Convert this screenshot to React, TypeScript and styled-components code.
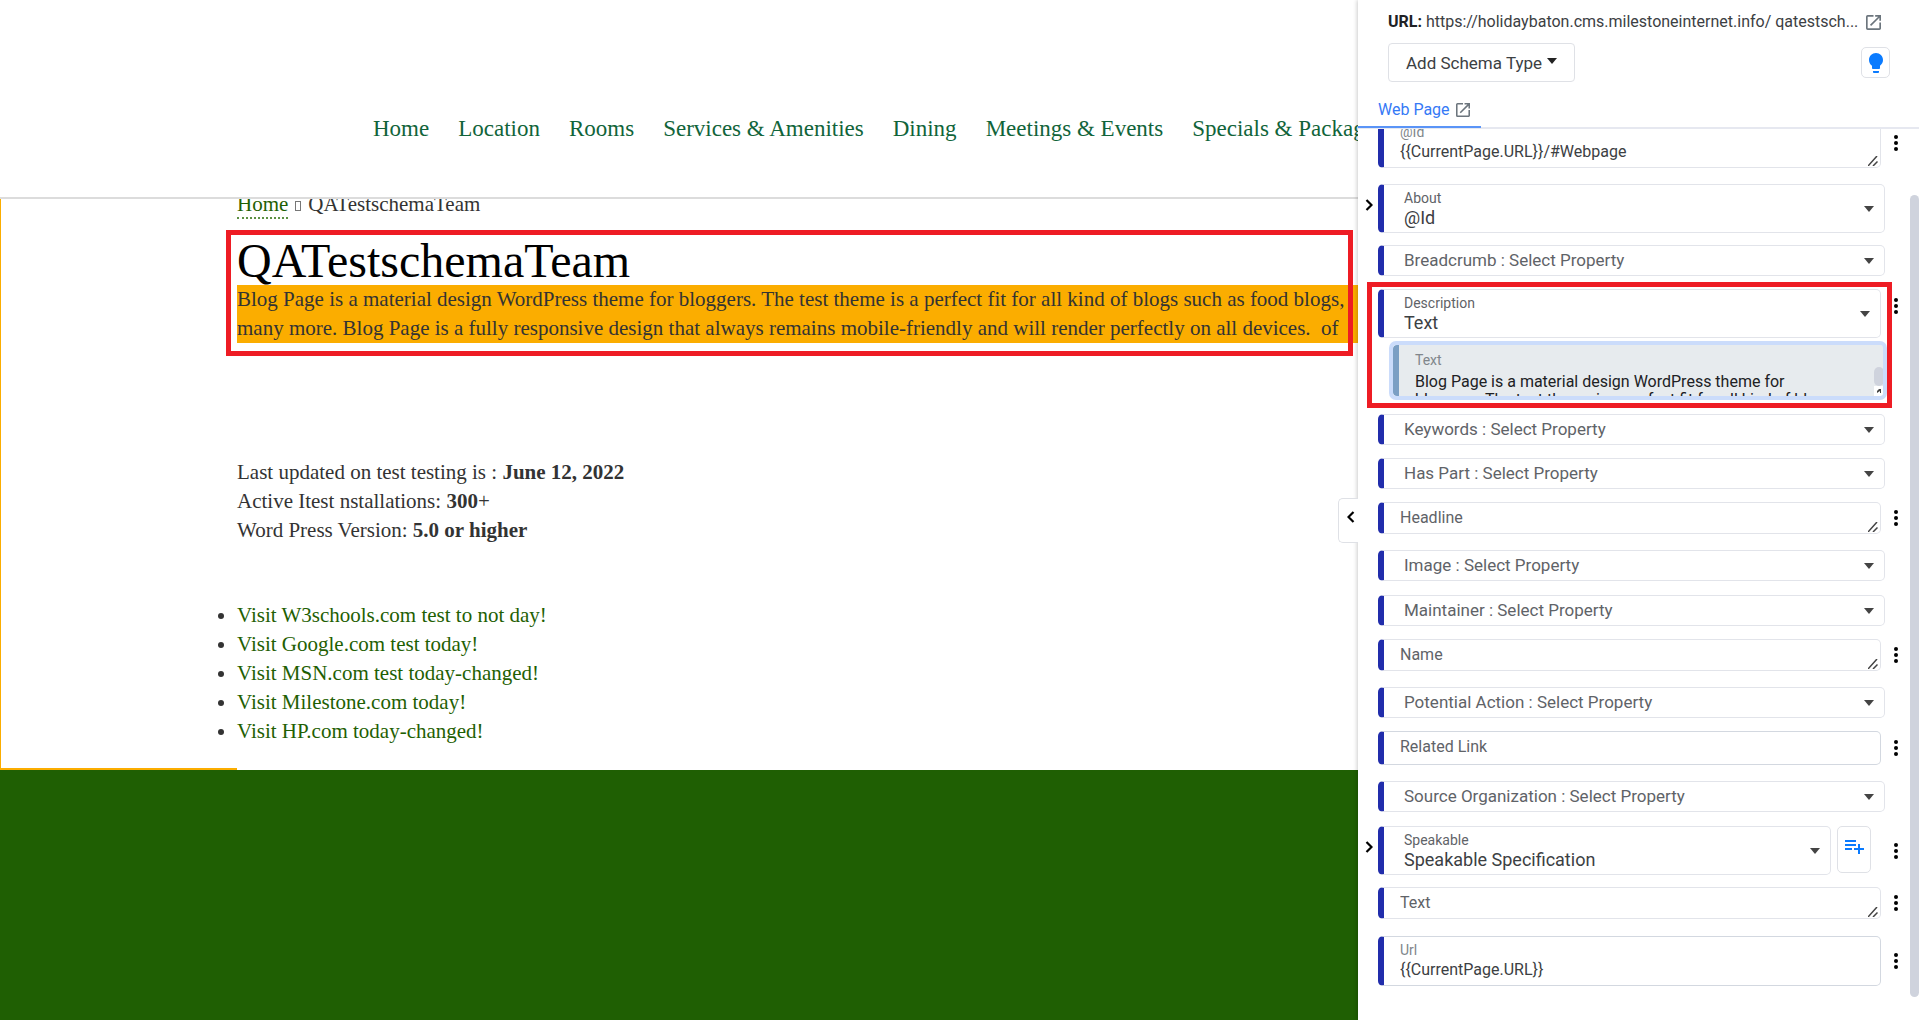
import React, { useId } from "react";
import styled, { createGlobalStyle, css } from "styled-components";

const Reset = createGlobalStyle`
  *, *::before, *::after { box-sizing: border-box; }
  body { margin: 0; background: #fff; }
  button, input, select, textarea { font: inherit; color: inherit; }
`;

/* ---------- page shell ---------- */

const Shell = styled.div`
  display: grid;
  grid-template-columns: minmax(0, 1fr) 561px;
  height: 100vh;
  overflow: hidden;
`;

/* ---------- site preview ---------- */

const Site = styled.div`
  display: flex;
  flex-direction: column;
  min-width: 0;
  overflow: hidden;
  position: relative;
  font-family: "Liberation Serif", "Times New Roman", serif;
  font-size: 21px;
  line-height: 29px;
  color: #333;
  white-space: nowrap;
`;

const SiteHeader = styled.header`
  flex: none;
  padding: 114px 0 53px 373px;
  border-bottom: 2px solid #dcdcdc;
`;

const SiteNav = styled.nav`
  display: flex;
  gap: 29px;
  font-size: 23px;
  line-height: 30px;

  a {
    color: #11643a;
    text-decoration: none;
  }
`;

const SiteBody = styled.main`
  flex: none;
  overflow: hidden;
  padding: 0 0 22px 236px;
  border-left: 1px solid #fbad00;
`;

const Crumbs = styled.div`
  margin-top: -10px;
  display: flex;
  align-items: center;
  gap: 7px;

  a {
    color: #1f5f03;
    text-decoration: none;
    border-bottom: 2px dotted #5c9144;
    line-height: 26px;
    margin-top: 2px;
  }
`;

const CrumbMark = styled.i`
  width: 6px;
  height: 10px;
  border: 1px solid #777;
  margin-top: 3px;
`;

const Title = styled.h1`
  margin: 17px 0 0;
  font-size: 48px;
  font-weight: 400;
  line-height: 49px;
  color: #000;
`;

const Highlight = styled.p`
  margin: 0;
  background: #fbad00;
`;

const Facts = styled.p`
  margin: 115px 0 0;
`;

const Links = styled.ul`
  margin: 56px 0 0;
  padding: 0;

  a {
    color: #1f5f03;
    text-decoration: none;
  }
`;

const Seam = styled.div`
  flex: none;
  width: 237px;
  height: 2px;
  background: #fbad00;
`;

const SiteFooter = styled.footer`
  flex: 1;
  background: #1f5f03;
`;

const Marker = styled.div<{ $area: "title" | "description" }>`
  position: absolute;
  z-index: 3;
  border: 5px solid #ee1c24;
  pointer-events: none;
  ${(p) =>
    p.$area === "title"
      ? css`
          inset: 230px 5px auto 226px;
          height: 126px;
        `
      : css`
          inset: -7px 18px -12px 9px;
        `}
`;

/* ---------- schema panel ---------- */

const Panel = styled.aside`
  position: relative;
  display: flex;
  flex-direction: column;
  min-width: 0;
  height: 100vh;
  background: #fff;
  box-shadow: -1px 0 4px rgba(0, 0, 0, 0.2);
  font-family: Roboto, "Liberation Sans", sans-serif;
  font-size: 16px;
  line-height: 20px;
  color: #3c4043;
`;

const CollapseTab = styled.button`
  position: absolute;
  left: -20px;
  top: 498px;
  width: 20px;
  height: 45px;
  padding: 0 0 8px 4px;
  display: grid;
  place-items: center;
  background: #fff;
  border: 1px solid #dfe1e6;
  border-right: 0;
  border-radius: 5px 0 0 5px;
`;

const PanelHead = styled.div`
  flex: none;
  height: 129px;
  display: flex;
  flex-direction: column;
  border-bottom: 2px solid #e6e8f0;
`;

const UrlLine = styled.div`
  display: flex;
  align-items: center;
  justify-content: space-between;
  padding: 12px 38px 0 30px;
`;

const UrlText = styled.span`
  white-space: nowrap;
  b { font-weight: 700; color: #202124; }
`;

const Tools = styled.div`
  display: flex;
  align-items: center;
  justify-content: space-between;
  padding: 11px 29px 0 30px;
`;

const AddType = styled.button`
  display: flex;
  align-items: center;
  gap: 5px;
  height: 39px;
  padding: 0 17px;
  background: #fff;
  border: 1px solid #dfe1e6;
  border-radius: 4px;
  font-size: 17px;

  svg { margin-bottom: 4px; }
`;

const SquareButton = styled.button<{ $w: number; $h: number }>`
  flex: none;
  width: ${(p) => p.$w}px;
  height: ${(p) => p.$h}px;
  display: grid;
  place-items: center;
  padding: 0 0 ${(p) => (p.$h > 40 ? 5 : 0)}px;
  background: #fff;
  border: 1px solid #dfe1e6;
  border-radius: 5px;
`;

const Tab = styled.a`
  align-self: flex-start;
  display: flex;
  align-items: center;
  gap: 6px;
  height: 45px;
  margin: auto 0 -1px;
  padding: 10px 11px 0 20px;
  color: #3579f6;
  text-decoration: none;
  border-bottom: 2px solid #5a94f7;
`;

const PanelBody = styled.div`
  flex: 1;
  min-height: 0;
  display: flex;
  justify-content: space-between;
  overflow: hidden;
`;

const Fields = styled.form`
  flex: 1;
  min-width: 0;
  display: flex;
  flex-direction: column;
  margin-top: -11px;
`;

const Track = styled.div`
  width: 9px;
  padding: 66px 0 23px;
`;

const Thumb = styled.div`
  height: 100%;
  background: #cfd3dd;
  border-radius: 5px;
`;

const Row = styled.div<{ $after: number }>`
  flex: none;
  display: grid;
  grid-template-columns: 20px minmax(0, 1fr) 25px;
  align-items: center;
  margin-bottom: ${(p) => p.$after}px;
`;

const Expander = styled.button`
  display: grid;
  place-items: center;
  padding: 0 0 8px 2px;
  width: 20px;
  height: 28px;
  border: 0;
  background: none;
`;

const RowMain = styled.div<{ $inset: number }>`
  grid-column: 2;
  display: flex;
  gap: 6px;
  min-width: 0;
  padding-right: ${(p) => p.$inset}px;
`;

const Box = styled.div<{ $h: number; $pad: number; $drop: number; $strong?: boolean }>`
  position: relative;
  flex: 1;
  min-width: 0;
  height: ${(p) => p.$h}px;
  display: flex;
  flex-direction: column;
  justify-content: center;
  padding-left: ${(p) => p.$pad}px;
  padding-bottom: ${(p) => p.$drop}px;
  border: 1px solid ${(p) => (p.$strong ? "#d3d8e0" : "#e2e4ea")};
  border-left: 6px solid #212dab;
  border-radius: 5px;
  background: #fff;
`;

const Caption = styled.label<{ $faint?: boolean }>`
  font-size: 14px;
  line-height: 20px;
  color: ${(p) => (p.$faint ? "#80868b" : "#5f6368")};
`;

const bare = css`
  display: block;
  width: 100%;
  margin: 0;
  padding: 0;
  border: 0;
  outline: 0;
  background: none;
  height: 20px;
  line-height: 20px;

  &::placeholder {
    color: #5f6368;
    opacity: 1;
  }
`;

const Picker = styled.select<{ $filled: boolean }>`
  ${bare}
  appearance: none;
  font-size: ${(p) => (p.$filled ? 18 : 17)}px;
  color: ${(p) => (p.$filled ? "#3c4043" : "#5f6368")};
`;

const LineInput = styled.input`
  ${bare}
`;

const Area = styled.textarea`
  ${bare}
  resize: none;
  overflow: hidden;
`;

const ArrowSlot = styled.span`
  position: absolute;
  right: 10px;
  top: 50%;
  margin-top: -3px;
  display: flex;
  pointer-events: none;
`;

const GripSlot = styled.span`
  position: absolute;
  right: 2px;
  bottom: 1px;
  display: flex;
`;

const MoreButton = styled.button<{ $raised?: boolean }>`
  grid-column: 3;
  display: grid;
  place-items: center;
  padding: 0 3px ${(p) => (p.$raised ? 15 : 0)}px 0;
  border: 0;
  background: none;
`;

const Group = styled.div`
  position: relative;
  flex: none;
  margin-bottom: 18px;
`;

const Nested = styled.div`
  position: relative;
  height: 51px;
  margin: 0 26px 0 35px;
  padding: 5px 0 0 16px;
  overflow: hidden;
  background: #e7ebee;
  border-left: 6px solid #7b9fc4;
  border-radius: 4px;
`;

const NestedRing = styled.div`
  position: absolute;
  inset: 52px 23px -4px 31px;
  border: 4px solid #cbdcfb;
  border-radius: 7px;
  z-index: 1;
  pointer-events: none;
`;

const NestedArea = styled(Area)`
  height: 40px;
  width: 430px;
  line-height: 18px;
  padding-top: 3px;
  color: #202124;
`;

const MiniThumb = styled.span`
  position: absolute;
  right: 0;
  top: 22px;
  width: 10px;
  height: 19px;
  border-radius: 5px;
  background: #cfd3dd;
`;

const MiniCorner = styled.span`
  position: absolute;
  right: 0;
  bottom: 0;
  width: 10px;
  height: 10px;
  display: grid;
  place-items: center;
  background: #fff;
`;

/* ---------- drawings ---------- */

const OpenIcon = ({ size }: { size: number }) => (
  <svg width={size} height={size} viewBox="3 3 18 18" fill="#6c757d" aria-hidden="true">
    <path d="M19 19H5V5h7V3H5a2 2 0 0 0-2 2v14a2 2 0 0 0 2 2h14c1.1 0 2-.9 2-2v-7h-2v7zM14 3v2h3.59l-9.83 9.83 1.41 1.41L19 6.41V10h2V3h-7z" />
  </svg>
);

const Triangle = ({ width = 10, color = "#444" }: { width?: number; color?: string }) => (
  <svg width={width} height="6" viewBox="0 0 10 6" preserveAspectRatio="none" fill={color} aria-hidden="true">
    <path d="M0 0h10L5 6z" />
  </svg>
);

const Chevron = ({ left }: { left?: boolean }) => (
  <svg width="8" height="12" viewBox="0 0 8 12" fill="none" stroke="#000" strokeWidth="2.2" aria-hidden="true">
    <path d={left ? "M6.5 1 1.5 6l5 5" : "M1.5 1l5 5-5 5"} />
  </svg>
);

const Dots = () => (
  <svg width="4" height="16" viewBox="0 0 4 16" aria-hidden="true">
    <circle cx="2" cy="2" r="2" />
    <circle cx="2" cy="8" r="2" />
    <circle cx="2" cy="14" r="2" />
  </svg>
);

const Grip = () => (
  <svg width="10" height="10" viewBox="0 0 10 10" stroke="#444" strokeWidth="1.5" aria-hidden="true">
    <path d="M0 10 9 0M5 10 9.500 5.500" />
  </svg>
);

const MiniGrip = () => (
  <svg width="4" height="4" viewBox="0 0 4 4" fill="#444" aria-hidden="true">
    <path d="M0 4V2l2-2h2v4H3V2z" />
  </svg>
);

const Bulb = () => (
  <svg width="14" height="20" viewBox="5 2 14 20" fill="#0a7bff" aria-hidden="true">
    <path d="M9 21c0 .5.4 1 1 1h4c.6 0 1-.5 1-1v-1H9v1zm3-19C8.100 2 5 5.100 5 9c0 2.400 1.200 4.500 3 5.700V17c0 .5.4 1 1 1h6c.6 0 1-.5 1-1v-2.300c1.800-1.300 3-3.400 3-5.700 0-3.900-3.100-7-7-7z" />
  </svg>
);

const AddList = () => (
  <svg width="19" height="14" viewBox="0 0 19 14" fill="#0a7bff" aria-hidden="true">
    <path d="M0 0h11v2H0zM0 4h11v2H0zM0 8h7v2H0zM13 4h2v4h4v2h-4v4h-2v-4H9V8h4z" />
  </svg>
);

/* ---------- fields ---------- */

type FieldProps = {
  kind: "select" | "area" | "line";
  name: string;
  value?: string;
  after?: number;
  more?: boolean;
  raised?: boolean;
  expand?: boolean;
  addable?: boolean;
};

const heights = { select: 31, area: 32, line: 34 };
const filledHeights = { select: 49, area: 50, line: 50 };
const drops = { select: 2, area: 0, line: 2 };
const filledDrops = { select: 1, area: 3, line: 3 };

function FieldBox({ kind, name, value }: FieldProps) {
  const id = useId();
  const filled = value !== undefined;
  return (
    <Box
      $h={(filled ? filledHeights : heights)[kind]}
      $pad={kind === "select" ? 20 : 16}
      $drop={(filled ? filledDrops : drops)[kind]}
      $strong={kind === "line"}
    >
      {filled && (
        <Caption htmlFor={id} $faint={kind !== "select"}>
          {name}
        </Caption>
      )}
      {kind === "select" && (
        <>
          <Picker id={id} $filled={filled} aria-label={filled ? undefined : name}>
            <option>{filled ? value : `${name} : Select Property`}</option>
          </Picker>
          <ArrowSlot>
            <Triangle />
          </ArrowSlot>
        </>
      )}
      {kind === "area" && (
        <>
          <Area id={id} rows={1} defaultValue={value} placeholder={name} aria-label={filled ? undefined : name} />
          <GripSlot>
            <Grip />
          </GripSlot>
        </>
      )}
      {kind === "line" && (
        <LineInput id={id} defaultValue={value} placeholder={name} aria-label={filled ? undefined : name} />
      )}
    </Box>
  );
}

function Field(props: FieldProps) {
  const { kind, name, after = kind === "select" ? 13 : 16, more, raised, expand, addable } = props;
  return (
    <Row $after={after}>
      {expand && (
        <Expander type="button" aria-label={`Expand ${name}`}>
          <Chevron />
        </Expander>
      )}
      <RowMain $inset={addable ? 14 : more ? 4 : 0}>
        <FieldBox {...props} />
        {addable && (
          <SquareButton type="button" $w={34} $h={47} aria-label={`Add ${name}`}>
            <AddList />
          </SquareButton>
        )}
      </RowMain>
      {more && (
        <MoreButton type="button" $raised={raised} aria-label={`${name} options`}>
          <Dots />
        </MoreButton>
      )}
    </Row>
  );
}

const nav = ["Home", "Location", "Rooms", "Services & Amenities", "Dining", "Meetings & Events", "Specials & Packages"];

const visits = [
  "Visit W3schools.com test to not day!",
  "Visit Google.com test today!",
  "Visit MSN.com test today-changed!",
  "Visit Milestone.com today!",
  "Visit HP.com today-changed!",
];

export default function App() {
  return (
    <Shell>
      <Reset />
      <Site>
        <SiteHeader>
          <SiteNav>
            {nav.map((item) => (
              <a key={item} href="#">{item}</a>
            ))}
          </SiteNav>
        </SiteHeader>
        <SiteBody>
          <Crumbs>
            <a href="#">Home</a>
            <CrumbMark />
            <span>QATestschemaTeam</span>
          </Crumbs>
          <Title>QATestschemaTeam</Title>
          <Highlight>
            Blog Page is a material design WordPress theme for bloggers. The test theme is a perfect fit for all kind of blogs such as food blogs,
            <br />
            many more. Blog Page is a fully responsive design that always remains mobile-friendly and will render perfectly on all devices. &nbsp;of
          </Highlight>
          <Facts>
            Last updated on test testing is : <b>June 12, 2022</b>
            <br />
            Active Itest nstallations: <b>300</b>+
            <br />
            Word Press Version: <b>5.0 or higher</b>
          </Facts>
          <Links>
            {visits.map((v) => (
              <li key={v}><a href="#">{v}</a></li>
            ))}
          </Links>
        </SiteBody>
        <Seam />
        <SiteFooter />
        <Marker $area="title" />
      </Site>

      <Panel>
        <CollapseTab type="button" aria-label="Collapse panel">
          <Chevron left />
        </CollapseTab>
        <PanelHead>
          <UrlLine>
            <UrlText>
              <b>URL:</b> https://holidaybaton.cms.milestoneinternet.info/ qatestsch...
            </UrlText>
            <OpenIcon size={15} />
          </UrlLine>
          <Tools>
            <AddType type="button">
              Add Schema Type <Triangle color="#222" />
            </AddType>
            <SquareButton type="button" $w={29} $h={31} aria-label="Hints">
              <Bulb />
            </SquareButton>
          </Tools>
          <Tab href="#">
            Web Page <OpenIcon size={14} />
          </Tab>
        </PanelHead>
        <PanelBody>
          <Fields>
            <Field kind="area" name="@Id" value="{{CurrentPage.URL}}/#Webpage" more />
            <Field kind="select" name="About" value="@Id" expand after={12} />
            <Field kind="select" name="Breadcrumb" />
            <Group>
              <Field kind="select" name="Description" value="Text" more raised after={7} />
              <Nested>
                <Caption htmlFor="nested-text" $faint>Text</Caption>
                <NestedArea
                  id="nested-text"
                  defaultValue="Blog Page is a material design WordPress theme for bloggers. The test theme is a perfect fit for all kind of blogs"
                />
                <MiniThumb />
                <MiniCorner>
                  <MiniGrip />
                </MiniCorner>
              </Nested>
              <NestedRing />
              <Marker $area="description" />
            </Group>
            <Field kind="select" name="Keywords" />
            <Field kind="select" name="Has Part" />
            <Field kind="area" name="Headline" more />
            <Field kind="select" name="Image" after={14} />
            <Field kind="select" name="Maintainer" />
            <Field kind="area" name="Name" more />
            <Field kind="select" name="Potential Action" />
            <Field kind="line" name="Related Link" more />
            <Field kind="select" name="Source Organization" after={14} />
            <Field kind="select" name="Speakable" value="Speakable Specification" expand addable more after={12} />
            <Field kind="area" name="Text" more after={17} />
            <Field kind="line" name="Url" value="{{CurrentPage.URL}}" more />
          </Fields>
          <Track>
            <Thumb />
          </Track>
        </PanelBody>
      </Panel>
    </Shell>
  );
}
